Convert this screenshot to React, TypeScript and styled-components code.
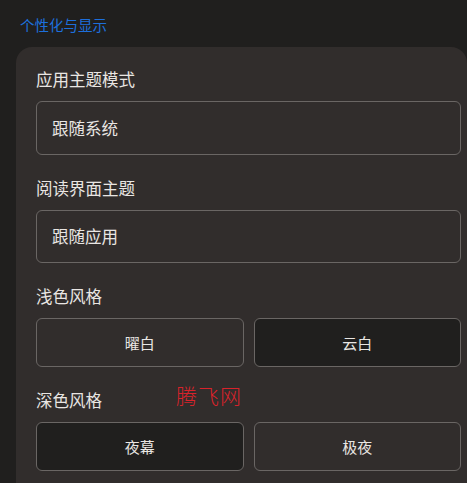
import styled, { createGlobalStyle } from 'styled-components';

const GlobalStyle = createGlobalStyle`
    html, body {
        margin: 0;
        padding: 0;
        background: #201f1e;
        font-family: "Noto Sans CJK SC", "Noto Sans", sans-serif;
        overflow: hidden;
    }
`;

const Page = styled.div`
    width: 467px;
    height: 483px;
    background: #201f1e;
    overflow: hidden;
`;

const Title = styled.div`
    padding: 15px 0 0 20px;
    height: 32px;
    box-sizing: border-box;
    font-size: 14.5px;
    line-height: 20px;
    color: #1d6fdc;
`;

const Card = styled.div`
    position: relative;
    margin-left: 16px;
    margin-top: 15px;
    padding: 21px 6px 20px 20px;
    background: #312d2c;
    border-radius: 16px 16px 0 0;
    min-height: 440px;
    box-sizing: border-box;
`;

const Section = styled.div`
    & + & {
        margin-top: 22px;
    }
`;

const Label = styled.div`
    font-size: 16.5px;
    line-height: 22px;
    color: #e9e6e3;
    margin-bottom: 11px;
`;

const Field = styled.div`
    height: 53.5px;
    box-sizing: border-box;
    border: 1px solid #6a6664;
    border-radius: 6px;
    display: flex;
    align-items: center;
    padding-left: 15px;
    font-size: 16.5px;
    color: #e9e6e3;
`;

const Choices = styled.div`
    display: grid;
    grid-template-columns: 1fr 1fr;
    gap: 10px;
`;

const Choice = styled.div<{ $active?: boolean }>`
    height: 49px;
    box-sizing: border-box;
    border: 1px solid #6a6664;
    border-radius: 6px;
    background: ${p => (p.$active ? '#201f1e' : 'transparent')};
    display: flex;
    align-items: center;
    justify-content: center;
    font-size: 15px;
    color: #e9e6e3;
`;

const Watermark = styled.div`
    position: absolute;
    left: 160px;
    top: 333px;
    font-size: 21px;
    font-weight: 300;
    color: #d9232b;
    letter-spacing: 1px;
`;

export default function App() {
    return (
        <Page>
            <GlobalStyle />
            <Title>个性化与显示</Title>
            <Card>
                <Section>
                    <Label>应用主题模式</Label>
                    <Field>跟随系统</Field>
                </Section>
                <Section>
                    <Label>阅读界面主题</Label>
                    <Field>跟随应用</Field>
                </Section>
                <Section>
                    <Label>浅色风格</Label>
                    <Choices>
                        <Choice>曜白</Choice>
                        <Choice $active>云白</Choice>
                    </Choices>
                </Section>
                <Section>
                    <Label>深色风格</Label>
                    <Choices>
                        <Choice $active>夜幕</Choice>
                        <Choice>极夜</Choice>
                    </Choices>
                </Section>
                <Watermark>腾飞网</Watermark>
            </Card>
        </Page>
    );
}
